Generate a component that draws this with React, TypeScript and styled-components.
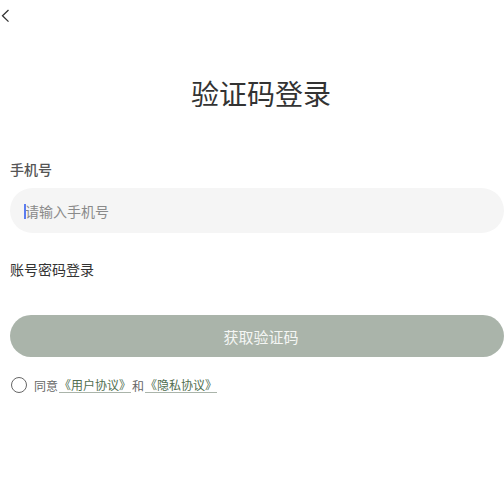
import React from "react";
import styled, { createGlobalStyle } from "styled-components";

const Global = createGlobalStyle`
  html, body { margin: 0; padding: 0; background: #ffffff; }
  body {
    font-family: "Noto Sans CJK SC", "Noto Sans", sans-serif;
    overflow: hidden;
  }
  * { box-sizing: border-box; }
`;

const Page = styled.div`
  width: 504px;
  padding: 0 0 0 10px;
  display: flex;
  flex-direction: column;
`;

const Header = styled.div`
  height: 30px;
  margin-left: -10px;
  display: flex;
  align-items: flex-start;
`;

const BackButton = styled.button`
  border: none;
  background: none;
  padding: 0;
  margin: 9px 0 0 1px;
  width: 10px;
  height: 14px;
  display: flex;
  cursor: pointer;
`;

const Title = styled.h1`
  margin: 43px 0 0 0;
  padding-left: 8px;
  font-size: 28px;
  line-height: 40px;
  font-weight: 400;
  color: #333333;
  text-align: center;
`;

const Label = styled.div`
  margin-top: 46px;
  font-size: 14px;
  line-height: 20px;
  font-weight: 500;
  color: #555555;
`;

const InputWrap = styled.div`
  position: relative;
  margin-top: 9px;
  height: 45px;
  border-radius: 22.5px;
  background: #f5f5f5;
  display: flex;
  align-items: center;
  padding: 0 15px;
`;

const Input = styled.input`
  flex: 1;
  border: none;
  outline: none;
  background: transparent;
  font-family: inherit;
  font-size: 14px;
  color: #333;
  padding: 0;
  &::placeholder { color: #8a8a8a; }
`;

const Caret = styled.span`
  position: absolute;
  left: 14px;
  top: 16px;
  width: 1.5px;
  height: 15px;
  background: #5b7cf0;
`;

const SwitchLink = styled.div`
  margin-top: 26px;
  font-size: 14px;
  line-height: 20px;
  color: #333333;
`;

const SubmitButton = styled.button`
  margin-top: 36px;
  height: 42px;
  border: none;
  border-radius: 21px;
  background: #aab4aa;
  color: #f4f6f4;
  font-family: inherit;
  font-size: 15px;
  padding: 0 0 0 8px;
  display: flex;
  align-items: center;
  justify-content: center;
`;

const Agreement = styled.div`
  margin-top: 18px;
  height: 20px;
  display: flex;
  align-items: center;
  font-size: 12px;
  color: #666666;
`;

const Radio = styled.span`
  width: 16px;
  height: 16px;
  margin-left: 1px;
  border-radius: 50%;
  border: 1.5px solid #666666;
  margin-right: 7px;
`;

const Link = styled.a`
  color: #4f6e4f;
  text-decoration: none;
  border-bottom: 1px solid #aab4aa;
  line-height: 15px;
  margin: 0 1px;
`;

export default function App() {
  return (
    <>
      <Global />
      <Page>
        <Header>
          <BackButton aria-label="返回">
            <svg width="10" height="14" viewBox="0 0 10 14">
              <path d="M7.5 1 L1.5 6.8 L7.5 12.6" fill="none" stroke="#333" strokeWidth="1.3" />
            </svg>
          </BackButton>
        </Header>
        <Title>验证码登录</Title>
        <Label>手机号</Label>
        <InputWrap>
          <Caret />
          <Input placeholder="请输入手机号" />
        </InputWrap>
        <SwitchLink>账号密码登录</SwitchLink>
        <SubmitButton>获取验证码</SubmitButton>
        <Agreement>
          <Radio />
          同意<Link>《用户协议》</Link>和<Link>《隐私协议》</Link>
        </Agreement>
      </Page>
    </>
  );
}
